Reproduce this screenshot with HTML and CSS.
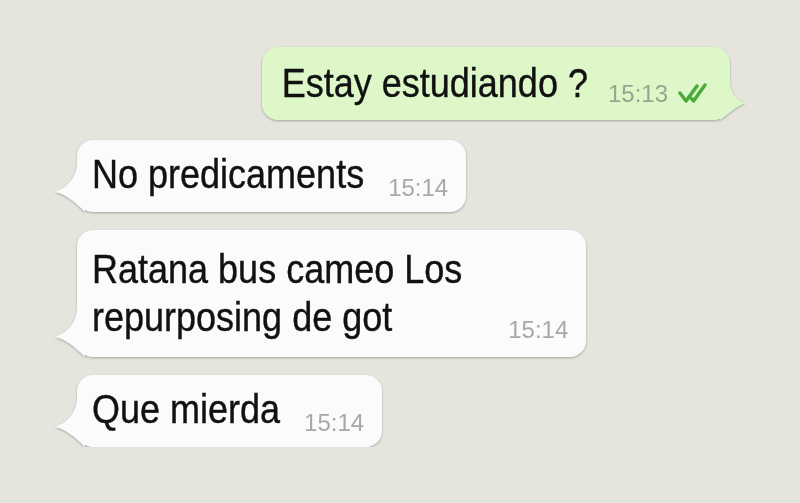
FILE: index.html
```html
<!DOCTYPE html>
<html lang="es">
<head>
    <meta charset="UTF-8">
    <meta name="viewport" content="width=device-width, initial-scale=1.0">
    <title>Chat</title>
    <link rel="stylesheet" href="styles.css">
</head>
<body>
    <!-- Conversacion -->
    <div class="chat">
        <div class="bubble out">
            <span class="text">Estay estudiando ?</span>
            <span class="time">15:13</span>
            <svg class="ticks" width="30" height="22" viewBox="0 0 30 22">
                <path d="M2 11 L8 19 L19 4" />
                <path d="M13 16 L15.5 19 L27 3" />
            </svg>
            <svg class="tail" width="26" height="40" viewBox="0 0 26 40">
                <path d="M0 0 H10 C10 12 15 20 25 23 C16 27 8 34 0 40 Z" />
            </svg>
        </div>

        <div class="bubble in">
            <span class="text">No predicaments</span>
            <span class="time">15:14</span>
            <svg class="tail" width="30" height="50" viewBox="0 0 30 50">
                <path d="M30 0 H22 C22 14 14 25 0 30 C10 32 20 40 30 50 Z" />
            </svg>
        </div>

        <div class="bubble in multi">
            <span class="text">Ratana bus cameo Los<br>repurposing de got</span>
            <span class="time">15:14</span>
            <svg class="tail" width="30" height="50" viewBox="0 0 30 50">
                <path d="M30 0 H22 C22 14 14 25 0 30 C10 32 20 40 30 50 Z" />
            </svg>
        </div>

        <div class="bubble in">
            <span class="text">Que mierda</span>
            <span class="time">15:14</span>
            <svg class="tail" width="30" height="50" viewBox="0 0 30 50">
                <path d="M30 0 H22 C22 14 14 25 0 30 C10 32 20 40 30 50 Z" />
            </svg>
        </div>
    </div>
</body>
</html>
```

FILE: styles.css
```css
/* Fondo y lista de mensajes */
body {
    margin: 0;
    background-color: #e5e5de;
    font-family: "Liberation Sans", Arial, sans-serif;
}
.chat {
    display: flex;
    flex-direction: column;
    gap: 18px;
    padding-top: 47px;
}
.bubble {
    position: relative;
    display: flex;
    align-items: flex-end;
    padding: 11px 18px 13px 15px;
    border-radius: 16px;
    filter: drop-shadow(0 1px 1.2px rgba(0, 0, 0, 0.28));
}
.text {
    font-size: 36px;
    line-height: 48px;
    color: #111;
    -webkit-text-stroke: 0.35px #111;
    transform: scaleY(1.12);
}
.time {
    margin-left: 24px;
    margin-bottom: -3px;
    font-size: 24px;
    line-height: 28px;
    color: #a8a8a8;
}
.tail {
    position: absolute;
    bottom: 0;
}

/* Mensaje enviado */
.out {
    align-self: flex-end;
    margin-right: 70px;
    margin-bottom: 2px;
    padding: 13px 22px 12px 20px;
    background-color: #ddf7c8;
}
.out .time {
    margin-left: 20px;
    margin-bottom: 0;
    color: #97a78f;
}
.out .tail {
    right: -16px;
    fill: #ddf7c8;
}
.ticks {
    margin-left: 10px;
    margin-bottom: 4px;
    fill: none;
    stroke: #4bab38;
    stroke-width: 3.5;
    stroke-linecap: round;
    stroke-linejoin: round;
}

/* Mensajes recibidos */
.in {
    align-self: flex-start;
    margin-left: 77px;
    background-color: #fbfbfb;
}
.in .tail {
    left: -22px;
    fill: #fbfbfb;
}
.multi {
    padding-top: 20px;
    padding-bottom: 21px;
}
.multi .text {
    line-height: 43px;
}
.multi .time {
    margin-left: 46px;
    margin-bottom: -8px;
}
```
